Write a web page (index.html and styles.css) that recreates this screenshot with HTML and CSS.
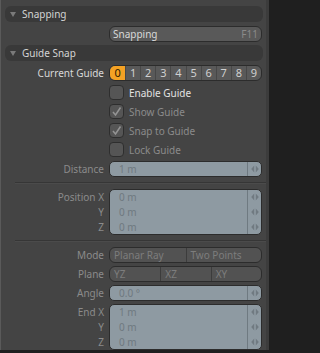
FILE: index.html
```html
<!DOCTYPE html>
<html>
<head>
<meta charset="utf-8">
<link rel="stylesheet" href="styles.css">
</head>
<body>
<div class="panel">
  <div class="hdr first"><span class="tri"></span>Snapping</div>
  <div class="row r-snap">
    <div class="lbl"></div>
    <div class="btn"><span>Snapping</span><span class="key">F11</span></div>
  </div>
  <div class="hdr"><span class="tri"></span>Guide Snap</div>
  <div class="row r-guide">
    <div class="lbl on">Current Guide</div>
    <div class="nums">
      <span class="num sel">0</span><span class="num">1</span><span class="num">2</span><span class="num">3</span><span class="num">4</span><span class="num">5</span><span class="num">6</span><span class="num">7</span><span class="num">8</span><span class="num">9</span>
    </div>
  </div>
  <div class="row r-cb">
    <div class="lbl"></div>
    <div class="cbrow on"><span class="cb"></span>Enable Guide</div>
  </div>
  <div class="row r-cb">
    <div class="lbl"></div>
    <div class="cbrow"><span class="cb"><svg viewBox="0 0 13 13" width="13" height="13"><path d="M3 7 L5.5 10 L10.5 2.5" fill="none" stroke="#949494" stroke-width="1.5"/></svg></span>Show Guide</div>
  </div>
  <div class="row r-cb">
    <div class="lbl"></div>
    <div class="cbrow"><span class="cb"><svg viewBox="0 0 13 13" width="13" height="13"><path d="M3 7 L5.5 10 L10.5 2.5" fill="none" stroke="#949494" stroke-width="1.5"/></svg></span>Snap to Guide</div>
  </div>
  <div class="row r-cb">
    <div class="lbl"></div>
    <div class="cbrow"><span class="cb"></span>Lock Guide</div>
  </div>
  <div class="row r-dist">
    <div class="lbl">Distance</div>
    <div class="field">
      <div class="frow"><span class="val">1 m</span><span class="arr"><svg viewBox="0 0 8 8" width="8" height="8"><path d="M3.2 0.5 L0.2 4 L3.2 7.5 Z M4.8 0.5 L7.8 4 L4.8 7.5 Z" fill="#707a81"/></svg></span></div>
    </div>
  </div>
  <div class="sep"></div>
  <div class="row r-group">
    <div class="lbls"><div>Position X</div><div>Y</div><div>Z</div></div>
    <div class="field">
      <div class="frow"><span class="val">0 m</span><span class="arr"><svg viewBox="0 0 8 8" width="8" height="8"><path d="M3.2 0.5 L0.2 4 L3.2 7.5 Z M4.8 0.5 L7.8 4 L4.8 7.5 Z" fill="#707a81"/></svg></span></div>
      <div class="frow"><span class="val">0 m</span><span class="arr"><svg viewBox="0 0 8 8" width="8" height="8"><path d="M3.2 0.5 L0.2 4 L3.2 7.5 Z M4.8 0.5 L7.8 4 L4.8 7.5 Z" fill="#707a81"/></svg></span></div>
      <div class="frow"><span class="val">0 m</span><span class="arr"><svg viewBox="0 0 8 8" width="8" height="8"><path d="M3.2 0.5 L0.2 4 L3.2 7.5 Z M4.8 0.5 L7.8 4 L4.8 7.5 Z" fill="#707a81"/></svg></span></div>
    </div>
  </div>
  <div class="sep"></div>
  <div class="row r-mode">
    <div class="lbl">Mode</div>
    <div class="seg"><span>Planar Ray</span><span>Two Points</span></div>
  </div>
  <div class="row r-next">
    <div class="lbl">Plane</div>
    <div class="seg three"><span>YZ</span><span>XZ</span><span>XY</span></div>
  </div>
  <div class="row r-next">
    <div class="lbl">Angle</div>
    <div class="field">
      <div class="frow"><span class="val">0.0 °</span><span class="arr"><svg viewBox="0 0 8 8" width="8" height="8"><path d="M3.2 0.5 L0.2 4 L3.2 7.5 Z M4.8 0.5 L7.8 4 L4.8 7.5 Z" fill="#707a81"/></svg></span></div>
    </div>
  </div>
  <div class="row r-next">
    <div class="lbls"><div>End X</div><div>Y</div><div>Z</div></div>
    <div class="field">
      <div class="frow"><span class="val">1 m</span><span class="arr"><svg viewBox="0 0 8 8" width="8" height="8"><path d="M3.2 0.5 L0.2 4 L3.2 7.5 Z M4.8 0.5 L7.8 4 L4.8 7.5 Z" fill="#707a81"/></svg></span></div>
      <div class="frow"><span class="val">0 m</span><span class="arr"><svg viewBox="0 0 8 8" width="8" height="8"><path d="M3.2 0.5 L0.2 4 L3.2 7.5 Z M4.8 0.5 L7.8 4 L4.8 7.5 Z" fill="#707a81"/></svg></span></div>
      <div class="frow"><span class="val">0 m</span><span class="arr"><svg viewBox="0 0 8 8" width="8" height="8"><path d="M3.2 0.5 L0.2 4 L3.2 7.5 Z M4.8 0.5 L7.8 4 L4.8 7.5 Z" fill="#707a81"/></svg></span></div>
    </div>
  </div>
</div>
</body>
</html>
```

FILE: styles.css
```css
html, body {
  margin: 0;
  padding: 0;
  background: #1f1f1f;
}
body {
  width: 269px;
  height: 353px;
  overflow: hidden;
  font-family: "Noto Sans", "Liberation Sans", Arial, sans-serif;
  font-size: 10px;
  color: #8b8b8b;
}
.panel {
  box-sizing: border-box;
  width: 269px;
  height: 350px;
  background: #444444;
  border-left: 1px solid #5a5a5a;
  border-right: 3px solid #3c3c3c;
  padding-top: 6px;
}
.hdr {
  box-sizing: border-box;
  height: 16px;
  margin-left: 4px;
  width: 258px;
  background: #393939;
  border-radius: 6px;
  display: flex;
  align-items: center;
  color: #d4d4d4;
  font-size: 10px;
  padding-left: 5px;
}
.hdr + .row { margin-top: 4px; }
.row + .hdr { margin-top: 3px; }
.tri {
  width: 0;
  height: 0;
  border-left: 3px solid transparent;
  border-right: 3px solid transparent;
  border-top: 5px solid #7a7a7a;
  margin-right: 6px;
  margin-top: 1px;
}
.row {
  display: grid;
  grid-template-columns: 103px 153px;
  column-gap: 5px;
  height: 16px;
}
.lbl {
  text-align: right;
  line-height: 16px;
  white-space: nowrap;
}
.lbl.on { color: #d8d8d8; }
.btn {
  box-sizing: border-box;
  height: 16px;
  background: #595959;
  border: 1px solid #2c2c2c;
  border-radius: 6px;
  display: flex;
  justify-content: space-between;
  align-items: center;
  padding: 0 3px 0 3px;
  color: #dadada;
}
.btn .key { color: #8a8a8a; }
.nums {
  box-sizing: border-box;
  height: 16px;
  display: grid;
  grid-template-columns: repeat(10, 1fr);
  border: 1px solid #2c2c2c;
  border-radius: 6px;
  overflow: hidden;
  background: #595959;
}
.num {
  text-align: center;
  line-height: 14px;
  color: #d0d0d0;
  font-size: 11px;
  border-left: 1px solid #474747;
}
.num:first-child { border-left: none; }
.num.sel {
  background: #f4a224;
  color: #2a1a00;
}
.r-guide + .r-cb { margin-top: 3px; }
.row.r-cb { height: 15px; margin-top: 4px; }
.cbrow {
  display: flex;
  align-items: center;
  height: 15px;
  color: #8b8b8b;
}
.cbrow.on { color: #e2e2e2; }
.cb {
  box-sizing: border-box;
  width: 15px;
  height: 15px;
  background: #555555;
  border: 1px solid #2e2e2e;
  border-radius: 4px;
  margin-right: 5px;
  display: flex;
  align-items: center;
  justify-content: center;
}
.r-dist { margin-top: 4px; height: 15px; }
.field {
  box-sizing: border-box;
  background: #8e9aa2;
  border: 1px solid #2c2c2c;
  border-radius: 5px;
  display: flex;
  flex-direction: column;
  overflow: hidden;
}
.frow {
  flex: 1;
  display: flex;
  align-items: center;
}
.val {
  flex: 1;
  padding-left: 9px;
  color: #6e7980;
}
.arr {
  width: 13px;
  align-self: stretch;
  border-left: 1px solid #6f7a81;
  display: flex;
  align-items: center;
  justify-content: center;
}
.sep {
  margin: 6px 0 5px 14px;
  height: 1px;
  background: #363636;
  border-bottom: 1px solid #4b4b4b;
}
.r-group { height: 46px; }
.r-group + .sep { margin-top: 5px; }
.lbls {
  display: flex;
  flex-direction: column;
  text-align: right;
}
.lbls div { flex: 1; display: flex; align-items: center; justify-content: flex-end; }
.row.r-next { margin-top: 3px; }
.row.r-next:last-child { height: 46px; }
.seg {
  box-sizing: border-box;
  height: 16px;
  background: #525252;
  border: 1px solid #2c2c2c;
  border-radius: 6px;
  display: grid;
  grid-template-columns: 1fr 1fr;
  overflow: hidden;
}
.seg.three { grid-template-columns: 1fr 1fr 1fr; }
.seg span {
  line-height: 14px;
  padding-left: 4px;
  color: #7d7d7d;
  border-left: 1px solid #3c3c3c;
}
.seg span:first-child { border-left: none; }
```
